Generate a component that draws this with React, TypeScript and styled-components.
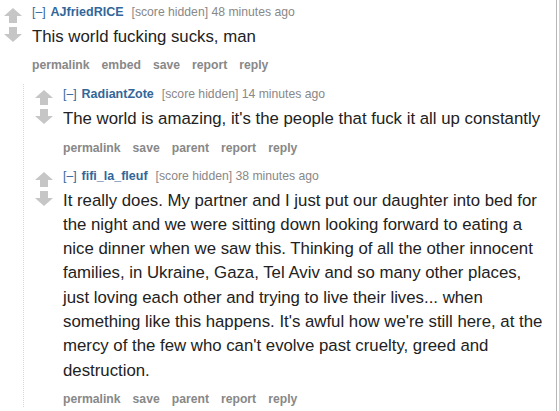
import React from 'react';
import styled, { createGlobalStyle } from 'styled-components';

const GlobalStyle = createGlobalStyle`
  body {
    margin: 0;
    background: #fff;
    font-family: "Liberation Sans", Arial, sans-serif;
  }
`;

const Page = styled.div`
  width: 556px;
  height: 411px;
  border-right: 1px solid #b8b8b8;
  overflow: hidden;
`;

const Thread = styled.div`
  padding: 2px 0 0 4px;
`;

const Comment = styled.div`
  display: flex;
  align-items: flex-start;
`;

const Votes = styled.div`
  display: flex;
  flex-direction: column;
  align-items: center;
  gap: 4px;
  width: 18px;
  flex-shrink: 0;
  padding-top: 6px;
  margin-right: 10px;
`;

const Entry = styled.div`
  flex: 1;
  min-width: 0;
`;

const Tagline = styled.div`
  font-size: 12.2px;
  line-height: 16px;
  color: #888;
  padding-top: 2px;
`;

const Expand = styled.span`
  color: #369;
  margin-right: 5px;
`;

const Author = styled.span`
  color: #369;
  font-weight: bold;
  font-size: 12.5px;
  margin-right: 8px;
`;

const Body = styled.div`
  font-size: 16.8px;
  line-height: 24.3px;
  color: #222;
  margin-top: 5px;
  padding-right: 4px;
`;

const Buttons = styled.ul`
  display: flex;
  gap: 12px;
  list-style: none;
  margin: 0;
  padding: 8px 0 0 0;
`;

const Button = styled.li`
  font-size: 12.2px;
  font-weight: bold;
  color: #888;
  line-height: 16px;
`;

const Children = styled.div`
  margin: 11px 0 0 19px;
  border-left: 1px dotted #d4d6ee;
  padding: 0 0 0 11px;
`;

const Child = styled.div<{ $first?: boolean }>`
  margin-top: ${(p) => (p.$first ? '0' : '10px')};
`;

function Arrow({ down }: { down?: boolean }) {
  return (
    <svg width="18" height="15" viewBox="0 0 18 15" style={down ? { transform: 'rotate(180deg)' } : undefined}>
      <path d="M9 0 L18 8 L13 8 L13 15 L5 15 L5 8 L0 8 Z" fill="#c6c6c6" />
    </svg>
  );
}

interface CommentData {
  author: string;
  age: string;
  text: string;
  buttons: string[];
}

const parent: CommentData = {
  author: 'AJfriedRICE',
  age: '48 minutes ago',
  text: 'This world fucking sucks, man',
  buttons: ['permalink', 'embed', 'save', 'report', 'reply'],
};

const replies: CommentData[] = [
  {
    author: 'RadiantZote',
    age: '14 minutes ago',
    text: "The world is amazing, it's the people that fuck it all up constantly",
    buttons: ['permalink', 'save', 'parent', 'report', 'reply'],
  },
  {
    author: 'fifi_la_fleuf',
    age: '38 minutes ago',
    text: "It really does. My partner and I just put our daughter into bed for the night and we were sitting down looking forward to eating a nice dinner when we saw this. Thinking of all the other innocent families, in Ukraine, Gaza, Tel Aviv and so many other places, just loving each other and trying to live their lives... when something like this happens. It's awful how we're still here, at the mercy of the few who can't evolve past cruelty, greed and destruction.",
    buttons: ['permalink', 'save', 'parent', 'report', 'reply'],
  },
];

function CommentRow({ data }: { data: CommentData }) {
  return (
    <Comment>
      <Votes>
        <Arrow />
        <Arrow down />
      </Votes>
      <Entry>
        <Tagline>
          <Expand>[–]</Expand>
          <Author>{data.author}</Author>
          [score hidden] {data.age}
        </Tagline>
        <Body>{data.text}</Body>
        <Buttons>
          {data.buttons.map((b) => (
            <Button key={b}>{b}</Button>
          ))}
        </Buttons>
      </Entry>
    </Comment>
  );
}

export default function App() {
  return (
    <Page>
      <GlobalStyle />
      <Thread>
        <CommentRow data={parent} />
        <Children>
          {replies.map((r, i) => (
            <Child key={r.author} $first={i === 0}>
              <CommentRow data={r} />
            </Child>
          ))}
        </Children>
      </Thread>
    </Page>
  );
}
